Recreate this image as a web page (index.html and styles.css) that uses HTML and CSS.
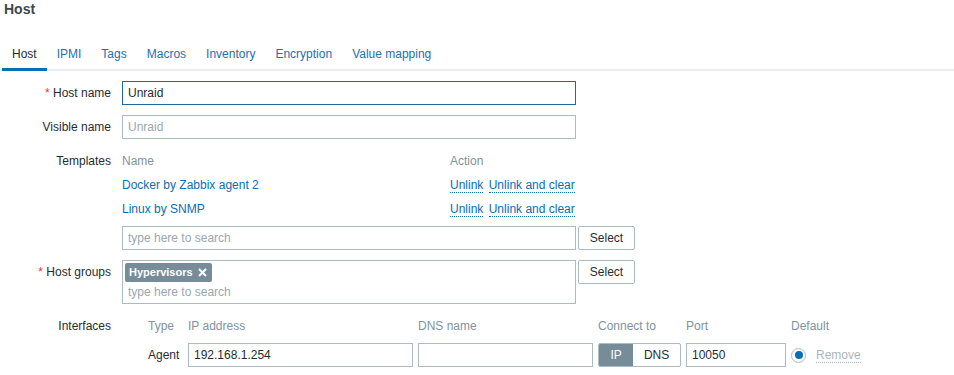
FILE: index.html
```html
<!DOCTYPE html>
<html lang="en">
<head>
    <meta charset="UTF-8">
    <title>Host</title>
    <link rel="stylesheet" href="styles.css">
</head>
<body>
    <h1 class="page-title">Host</h1>

    <ul class="tabs">
        <li class="tab active">Host</li>
        <li class="tab">IPMI</li>
        <li class="tab">Tags</li>
        <li class="tab">Macros</li>
        <li class="tab">Inventory</li>
        <li class="tab">Encryption</li>
        <li class="tab">Value mapping</li>
    </ul>

    <form class="host-form">
        <label class="form-label"><span class="req">*</span> Host name</label>
        <div class="form-field">
            <input class="text-input focused" type="text" value="Unraid">
        </div>

        <label class="form-label">Visible name</label>
        <div class="form-field">
            <input class="text-input" type="text" placeholder="Unraid">
        </div>

        <label class="form-label">Templates</label>
        <div class="form-field">
            <div class="templates">
                <div class="tpl-row tpl-head">
                    <span class="tpl-name">Name</span>
                    <span>Action</span>
                </div>
                <div class="tpl-row">
                    <span class="tpl-name link">Docker by Zabbix agent 2</span>
                    <span class="actions"><a class="dotted">Unlink</a> <a class="dotted">Unlink and clear</a></span>
                </div>
                <div class="tpl-row">
                    <span class="tpl-name link">Linux by SNMP</span>
                    <span class="actions"><a class="dotted">Unlink</a> <a class="dotted">Unlink and clear</a></span>
                </div>
            </div>
            <div class="select-line">
                <input class="text-input" type="text" placeholder="type here to search">
                <button type="button" class="btn">Select</button>
            </div>
        </div>

        <label class="form-label"><span class="req">*</span> Host groups</label>
        <div class="form-field">
            <div class="select-line">
                <div class="multiselect">
                    <span class="chip">Hypervisors
                        <svg class="chip-x" width="9" height="9" viewBox="0 0 9 9">
                            <path d="M1 1 L8 8 M8 1 L1 8" stroke="#fff" stroke-width="2" fill="none"/>
                        </svg>
                    </span>
                    <input class="ms-search" type="text" placeholder="type here to search">
                </div>
                <button type="button" class="btn">Select</button>
            </div>
        </div>

        <label class="form-label">Interfaces</label>
        <div class="form-field">
            <div class="interfaces">
                <span></span>
                <span class="col-head">Type</span>
                <span class="col-head">IP address</span>
                <span class="col-head">DNS name</span>
                <span class="col-head">Connect to</span>
                <span class="col-head">Port</span>
                <span class="col-head">Default</span>

                <span></span>
                <span class="if-type">Agent</span>
                <input class="text-input" type="text" value="192.168.1.254">
                <input class="text-input" type="text" value="">
                <div class="toggle">
                    <span class="toggle-opt on">IP</span>
                    <span class="toggle-opt">DNS</span>
                </div>
                <input class="text-input" type="text" value="10050">
                <div class="default-cell">
                    <span class="radio"></span>
                    <span class="remove">Remove</span>
                </div>
            </div>
        </div>
    </form>
</body>
</html>
```

FILE: styles.css
```css
body {
    margin: 0;
    font-family: "Liberation Sans", Arial, sans-serif;
    font-size: 12px;
    color: #1f2c33;
    background: #fff;
}

.page-title {
    margin: 0;
    padding: 0 4px;
    font-size: 14px;
    line-height: 18px;
    font-weight: bold;
    color: #3b4850;
}

/* tabs */
.tabs {
    list-style: none;
    margin: 22px 0 0;
    padding: 0 0 0 2px;
    display: flex;
    box-shadow: inset 0 -2px 0 #ebeef0;
}

.tab {
    padding: 7px 10px 7px;
    line-height: 14px;
    color: #1f6fb0;
    border-bottom: 3px solid transparent;
}

.tab.active {
    color: #1f2c33;
    border-bottom-color: #0a6eb4;
}

/* form grid */
.host-form {
    display: grid;
    grid-template-columns: 111px 1fr;
    column-gap: 11px;
    row-gap: 10px;
    padding-top: 10px;
}

.form-label {
    text-align: right;
    line-height: 24px;
}

.req {
    color: #e33734;
}

.form-field {
    min-width: 0;
}

.text-input {
    box-sizing: border-box;
    width: 454px;
    height: 24px;
    margin: 0;
    padding: 0 5px;
    border: 1px solid #acbbc2;
    border-radius: 0;
    font-family: inherit;
    font-size: 12px;
    color: #1f2c33;
    background: #fff;
    outline: none;
}

.text-input::placeholder,
.ms-search::placeholder {
    color: #9aa8b0;
}

.text-input.focused {
    border-color: #1c68a6;
}

/* templates */
.tpl-row {
    display: flex;
    line-height: 24px;
}

.tpl-name {
    width: 328px;
}

.tpl-head {
    color: #7f939e;
}

.link,
.dotted {
    color: #0a6eb4;
}

.dotted {
    border-bottom: 1px dotted #0a6eb4;
    margin-right: 2px;
}

.select-line {
    display: flex;
    align-items: flex-start;
    gap: 2px;
}

.templates + .select-line {
    margin-top: 5px;
}

.btn {
    box-sizing: border-box;
    width: 57px;
    height: 24px;
    padding: 0;
    border: 1px solid #acbbc2;
    border-radius: 2px;
    background: #fff;
    font-family: inherit;
    font-size: 12px;
    color: #1f2c33;
}

/* host groups */
.multiselect {
    box-sizing: border-box;
    width: 454px;
    height: 44px;
    border: 1px solid #acbbc2;
    padding: 2px;
    display: flex;
    flex-direction: column;
    align-items: flex-start;
}

.chip {
    display: flex;
    align-items: center;
    gap: 5px;
    background: #768d99;
    color: #fff;
    font-size: 11px;
    font-weight: bold;
    line-height: 19px;
    padding: 0 5px 0 4px;
    border-radius: 2px;
}

.ms-search {
    border: none;
    outline: none;
    height: 20px;
    width: 300px;
    padding: 0 3px;
    margin: 0;
    font-family: inherit;
    font-size: 12px;
}

/* interfaces */
.interfaces {
    display: grid;
    grid-template-columns: 21px 35px 225px 175px 83px 100px auto;
    column-gap: 5px;
    row-gap: 5px;
    align-items: center;
}

.col-head {
    line-height: 24px;
    color: #7f939e;
}

.interfaces .text-input {
    width: 100%;
}

.toggle {
    display: flex;
    height: 24px;
    box-sizing: border-box;
    border: 1px solid #acbbc2;
    border-radius: 2px;
    overflow: hidden;
}

.toggle-opt {
    line-height: 22px;
    text-align: center;
    width: 48px;
}

.toggle-opt.on {
    width: 35px;
    background: #768d99;
    color: #fff;
}

.default-cell {
    display: flex;
    align-items: center;
    gap: 10px;
}

.radio {
    box-sizing: border-box;
    width: 15px;
    height: 15px;
    border: 1px solid #acbbc2;
    border-radius: 50%;
    display: flex;
    align-items: center;
    justify-content: center;
}

.radio::after {
    content: "";
    width: 8px;
    height: 8px;
    border-radius: 50%;
    background: #0a6eb4;
}

.remove {
    color: #aab6bd;
    border-bottom: 1px dotted #aab6bd;
}
```
